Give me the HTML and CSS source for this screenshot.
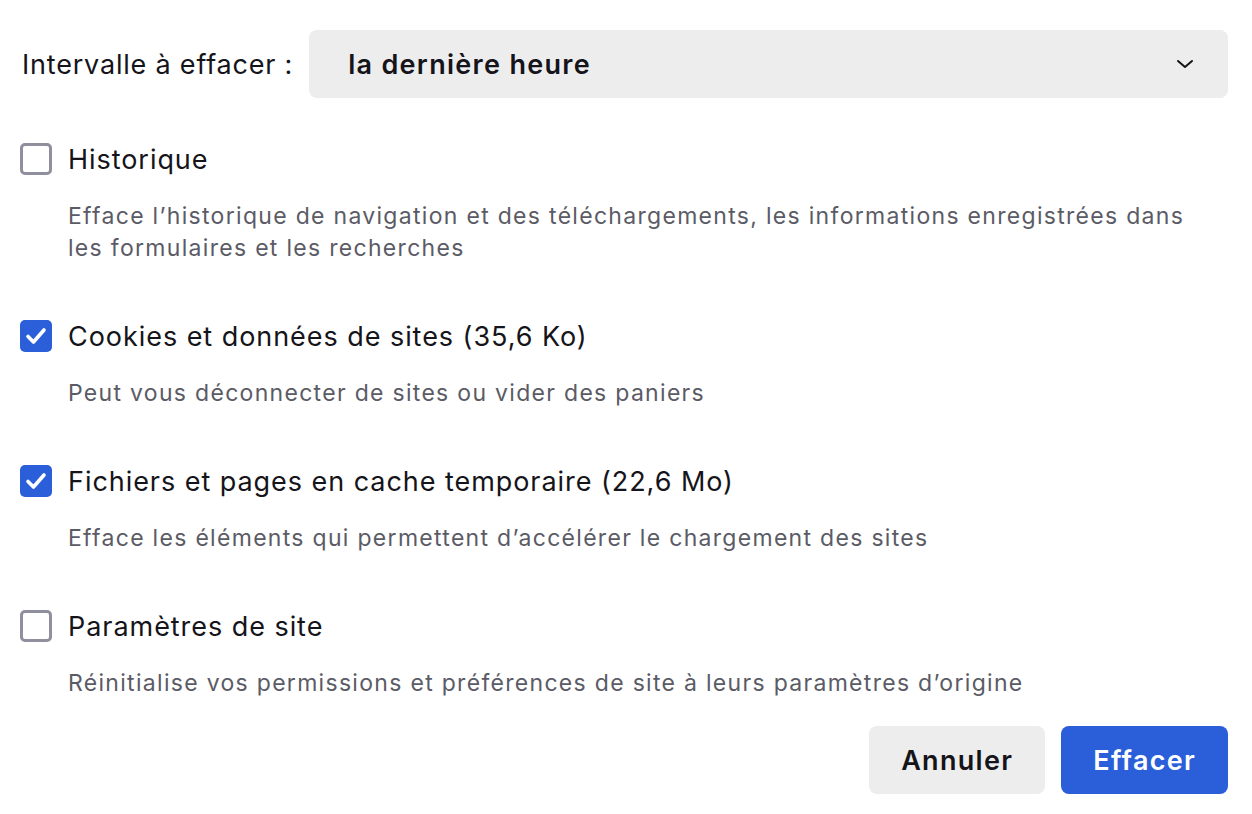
FILE: index.html
```html
<!DOCTYPE html>
<html lang="fr">

<head>
  <meta charset="UTF-8">
  <meta name="viewport" content="width=device-width, initial-scale=1.0">
  <title>Effacer l'historique récent</title>
  <link rel="stylesheet" href="styles.css">
</head>

<body>
  <div class="dialog">
    <div class="range">
      <span class="range-label">Intervalle à effacer :</span>
      <div class="select">
        <span class="select-value">la dernière heure</span>
        <svg class="chevron" width="18" height="10" viewBox="0 0 18 10">
          <path d="M2 2 L9 8 L16 2" fill="none" stroke="#15141a" stroke-width="2" stroke-linecap="round" stroke-linejoin="round" />
        </svg>
      </div>
    </div>

    <div class="options">
      <div class="option">
        <label class="option-title">
          <span class="box"></span>
          <span>Historique</span>
        </label>
        <p class="option-desc">Efface l’historique de navigation et des téléchargements, les informations enregistrées dans les formulaires et les recherches</p>
      </div>

      <div class="option">
        <label class="option-title">
          <span class="box checked">
            <svg width="22" height="18" viewBox="0 0 22 18">
              <path d="M3 9.5 L8.5 15 L19 3" fill="none" stroke="#fff" stroke-width="3.6" stroke-linecap="round" stroke-linejoin="round" />
            </svg>
          </span>
          <span>Cookies et données de sites (35,6 Ko)</span>
        </label>
        <p class="option-desc">Peut vous déconnecter de sites ou vider des paniers</p>
      </div>

      <div class="option">
        <label class="option-title">
          <span class="box checked">
            <svg width="22" height="18" viewBox="0 0 22 18">
              <path d="M3 9.5 L8.5 15 L19 3" fill="none" stroke="#fff" stroke-width="3.6" stroke-linecap="round" stroke-linejoin="round" />
            </svg>
          </span>
          <span>Fichiers et pages en cache temporaire (22,6 Mo)</span>
        </label>
        <p class="option-desc">Efface les éléments qui permettent d’accélérer le chargement des sites</p>
      </div>

      <div class="option">
        <label class="option-title">
          <span class="box"></span>
          <span>Paramètres de site</span>
        </label>
        <p class="option-desc">Réinitialise vos permissions et préférences de site à leurs paramètres d’origine</p>
      </div>
    </div>

    <div class="actions">
      <button class="btn">Annuler</button>
      <button class="btn primary">Effacer</button>
    </div>
  </div>
</body>

</html>
```

FILE: styles.css
```css
body {
  margin: 0;
  background: #fff;
  color: #15141a;
  font-family: Inter, "Noto Sans", sans-serif;
}

.dialog {
  padding: 30px 24px 20px 20px;
}

/* ligne de l'intervalle */
.range {
  display: flex;
  align-items: center;
  gap: 16px;
}

.range-label {
  padding-left: 2px;
  font-size: 27px;
  letter-spacing: 0.8px;
}

.select {
  flex: 1;
  display: flex;
  align-items: center;
  justify-content: space-between;
  height: 68px;
  padding: 0 34px 0 39px;
  background: #ededed;
  border-radius: 8px;
}

.select-value {
  font-size: 27px;
  font-weight: 600;
  letter-spacing: 1.3px;
}

/* cases à cocher */
.options {
  display: flex;
  flex-direction: column;
  gap: 56px;
  margin-top: 45px;
}

.option-title {
  display: flex;
  align-items: center;
  gap: 16px;
  height: 32px;
  font-size: 27px;
  letter-spacing: 0.95px;
}

.box {
  box-sizing: border-box;
  display: flex;
  align-items: center;
  justify-content: center;
  width: 32px;
  height: 32px;
  border: 3px solid #8f8f9d;
  border-radius: 5px;
}

.box.checked {
  border: none;
  background: #2a5fd9;
}

.option-desc {
  max-width: 1140px;
  margin: 25px 0 0 48px;
  font-size: 23px;
  line-height: 32px;
  letter-spacing: 1.3px;
  color: #5b5b66;
}

/* boutons */
.actions {
  display: flex;
  justify-content: flex-end;
  gap: 16px;
  margin-top: 27px;
}

.btn {
  height: 68px;
  padding: 0 32px;
  border: none;
  border-radius: 8px;
  background: #ededed;
  color: #15141a;
  font-family: inherit;
  font-size: 27px;
  font-weight: 600;
  letter-spacing: 1.3px;
}

.btn.primary {
  background: #2a5fd9;
  color: #fff;
}
```
